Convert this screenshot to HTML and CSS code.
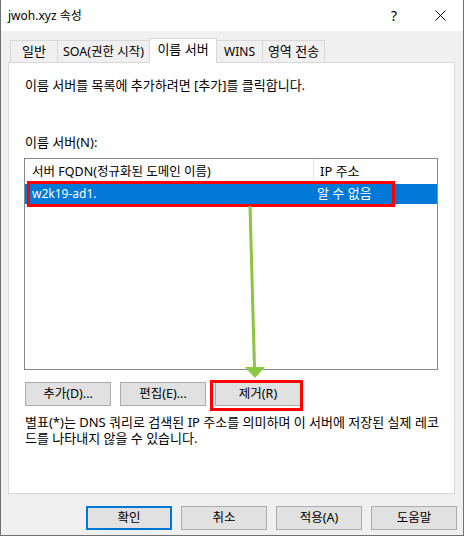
FILE: index.html
```html
<!DOCTYPE html>
<html lang="ko">
<head>
    <meta charset="UTF-8">
    <title>jwoh.xyz 속성</title>
    <link rel="stylesheet" href="styles.css">
</head>
<body>
    <div class="window">
        <div class="titlebar">
            <span class="title">jwoh.xyz 속성</span>
            <div class="caption-buttons">
                <span class="cap-btn help">?</span>
                <span class="cap-btn close">
                    <svg width="11" height="11" viewBox="0 0 11 11">
                        <path d="M0.5 0.5 L10.5 10.5 M10.5 0.5 L0.5 10.5" stroke="#000" stroke-width="1" fill="none"/>
                    </svg>
                </span>
            </div>
        </div>

        <div class="client">
            <div class="tabs">
                <div class="tab tab-general">일반</div>
                <div class="tab tab-soa">SOA(권한 시작)</div>
                <div class="tab tab-ns active">이름 서버</div>
                <div class="tab tab-wins">WINS</div>
                <div class="tab tab-xfer">영역 전송</div>
            </div>

            <div class="panel">
                <p class="hint">이름 서버를 목록에 추가하려면 [추가]를 클릭합니다.</p>
                <label class="list-label">이름 서버(N):</label>

                <div class="listview">
                    <div class="lv-header">
                        <div class="col col-name">서버 FQDN(정규화된 도메인 이름)</div>
                        <div class="col col-ip">IP 주소</div>
                    </div>
                    <div class="lv-row selected">
                        <div class="col col-name">w2k19-ad1.</div>
                        <div class="col col-ip">알 수 없음</div>
                    </div>
                </div>

                <div class="btn-row">
                    <button class="btn">추가(D)...</button>
                    <button class="btn">편집(E)...</button>
                    <button class="btn">제거(R)</button>
                </div>

                <p class="note">별표(*)는 DNS 쿼리로 검색된 IP 주소를 의미하며 이 서버에 저장된 실제 레코<br>드를 나타내지 않을 수 있습니다.</p>
            </div>

            <div class="dialog-buttons">
                <button class="btn default">확인</button>
                <button class="btn">취소</button>
                <button class="btn">적용(A)</button>
                <button class="btn">도움말</button>
            </div>
        </div>

        <!-- annotations drawn over the dialog -->
        <div class="mark mark-row"></div>
        <div class="mark mark-remove"></div>
        <svg class="arrow" width="465" height="537" viewBox="0 0 465 537">
            <line x1="250" y1="206" x2="254.5" y2="368" stroke="#8cc63f" stroke-width="3"/>
            <polygon points="245,367 265,367 255,378" fill="#8cc63f"/>
        </svg>
    </div>
</body>
</html>
```

FILE: styles.css
```css
body {
    margin: 0;
    padding: 0;
    background-color: #fff;
    font-family: "Noto Sans", "Noto Sans CJK KR", sans-serif;
    font-size: 13px;
    color: #000;
}
.window {
    position: relative;
    width: 464px;
    height: 536px;
    box-sizing: border-box;
    border-left: 1px solid #707070;
    border-right: 1px solid #707070;
    border-bottom: 1px solid #707070;
    display: flex;
    flex-direction: column;
}
.titlebar {
    height: 31px;
    display: flex;
    align-items: center;
    background-color: #fff;
}
.title {
    padding-left: 7px;
    font-size: 12px;
    line-height: 16px;
    flex: 1;
}
.caption-buttons {
    display: flex;
    height: 31px;
}
.cap-btn {
    width: 46px;
    height: 31px;
    display: flex;
    align-items: center;
    justify-content: center;
}
.help {
    font-size: 14px;
}
.client {
    flex: 1;
    background-color: #f0f0f0;
    padding: 7px 8px 0 7px;
}
.tabs {
    display: flex;
    align-items: flex-end;
    margin-left: 2px;
    height: 24px;
}
.tab {
    box-sizing: border-box;
    height: 22px;
    border: 1px solid #d9d9d9;
    border-bottom: none;
    background-color: #f0f0f0;
    text-align: center;
    line-height: 21px;
    margin-left: -1px;
    white-space: nowrap;
    overflow: hidden;
}
.tab-general { width: 48px; margin-left: 0; }
.tab-soa { width: 93px; font-size: 12.5px; }
.tab-ns { width: 68px; }
.tab-wins { width: 47px; font-size: 12px; }
.tab-xfer { width: 63px; }
.tab.active {
    position: relative;
    z-index: 1;
    height: 25px;
    margin-bottom: -1px;
    background-color: #fff;
    line-height: 20px;
}
.panel {
    box-sizing: border-box;
    height: 432px;
    border: 1px solid #d9d9d9;
    background-color: #fff;
    padding: 14px 16px;
}
.hint,
.note {
    margin: 0;
    line-height: 16px;
}
.list-label {
    display: block;
    margin-top: 41px;
    line-height: 16px;
}
.listview {
    box-sizing: border-box;
    width: 414px;
    height: 212px;
    margin: 8px 0 0 -1px;
    border: 1px solid #828790;
}
.lv-header {
    display: flex;
    height: 25px;
    line-height: 25px;
}
.lv-header .col-name {
    border-right: 1px solid #e5e5e5;
    font-size: 12.5px;
}
.col {
    box-sizing: border-box;
    white-space: nowrap;
}
.col-name {
    width: 289px;
    padding-left: 7px;
}
.lv-header .col-ip {
    padding-left: 6px;
}
.lv-row {
    display: flex;
    height: 20px;
    line-height: 19px;
}
.lv-row .col-name {
    font-size: 12px;
}
.lv-row .col-ip {
    padding-left: 3px;
}
.lv-row.selected {
    background-color: #0078d7;
    color: #fff;
}
.btn-row {
    display: flex;
    gap: 9px;
    margin-top: 12px;
}
.btn {
    box-sizing: border-box;
    width: 86px;
    height: 24px;
    padding: 0;
    border: 1px solid #adadad;
    background-color: #e1e1e1;
    font-family: inherit;
    font-size: 12.5px;
    color: #000;
    line-height: 20px;
}
.btn.default {
    border: 2px solid #0078d7;
}
.note {
    margin-top: 8px;
    white-space: nowrap;
}
.dialog-buttons {
    display: flex;
    justify-content: flex-end;
    gap: 9px;
    margin-top: 12px;
    margin-right: -2px;
}
.mark {
    position: absolute;
    box-sizing: border-box;
    border: 3px solid #f00;
}
.mark-row {
    left: 26px;
    top: 181px;
    width: 368px;
    height: 26px;
}
.mark-remove {
    left: 209px;
    top: 380px;
    width: 93px;
    height: 31px;
}
.arrow {
    position: absolute;
    left: -1px;
    top: 0;
    pointer-events: none;
}
```
